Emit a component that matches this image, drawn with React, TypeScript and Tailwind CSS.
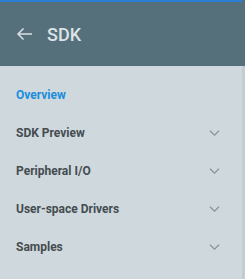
import React from "react";

const items = ["SDK Preview", "Peripheral I/O", "User-space Drivers", "Samples"];

function Chevron() {
  return (
    <svg width="11" height="6" viewBox="0 0 11 6" fill="none" className="text-[#87949a]">
      <path d="M1 0.8l4.5 4.4 4.5-4.4" stroke="currentColor" strokeWidth="1.2" />
    </svg>
  );
}

export default function App() {
  return (
    <div className="w-[250px] h-[279px] flex bg-white overflow-hidden" style={{ fontFamily: "Roboto, 'Liberation Sans', sans-serif" }}>
      <div className="w-[242px] flex flex-col">
        <div className="h-[2px] bg-[#2a7fd4]" />
        <div className="h-[64px] bg-[#56707b] flex items-center pl-[16px]">
          <svg width="17" height="14" viewBox="0 0 17 14" fill="none" className="text-[#d9e0e3]">
            <path d="M16 7H2M7.5 1.5L2 7l5.5 5.5" stroke="currentColor" strokeWidth="1.5" />
          </svg>
          <span className="ml-[14px] text-[18px] font-medium text-[#dde3e6]">SDK</span>
        </div>
        <div className="flex-1 bg-[#cfd8dc] pt-[18px]">
          <div className="h-[22px] flex items-center pl-[16px] text-[12px] font-bold text-[#1a8ddd]">Overview</div>
          <div className="mt-[8px] flex flex-col">
            {items.map((t) => (
              <div key={t} className="h-[38px] flex items-center pl-[16px] pr-[22px] justify-between">
                <span className="text-[12px] font-bold text-[#444c50]">{t}</span>
                <Chevron />
              </div>
            ))}
          </div>
        </div>
      </div>
      <div className="w-[3px] flex flex-col">
        <div className="h-[66px] bg-[#56707b]" />
        <div className="flex-1 bg-[#c3ccd0]" />
      </div>
      <div className="flex-1 bg-white" />
    </div>
  );
}
